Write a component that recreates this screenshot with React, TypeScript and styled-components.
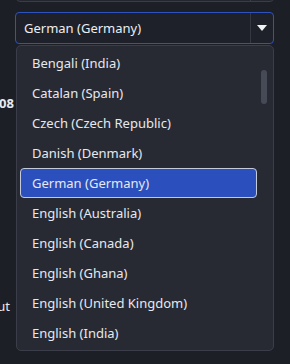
import React from "react";
import styled, { createGlobalStyle } from "styled-components";

const GlobalStyle = createGlobalStyle`
  html, body { margin: 0; padding: 0; background: #1c1f26; }
  body { font-family: "Noto Sans", "Open Sans", sans-serif; }
  * { box-sizing: border-box; }
`;

const Page = styled.div`
  position: relative;
  width: 290px;
  height: 364px;
  overflow: hidden;
  background: #1c1f26;
  color: #e4e7ee;
`;

const Column = styled.div`
  display: flex;
  flex-direction: column;
  gap: 10px;
  margin-top: -30px;
  padding-left: 15px;
`;

const PrevSelect = styled.div`
  width: 258px;
  height: 32px;
  margin-left: 1px;
  border: 1px solid #3a3d47;
  border-radius: 4px;
  background: #23262e;
  display: flex;
  justify-content: flex-end;
`;

const PrevDivider = styled.div`
  width: 23px;
  border-left: 1px solid #3a3d47;
`;

const SelectBox = styled.div`
  width: 259px;
  height: 32px;
  border: 1px solid #2e52be;
  border-radius: 4px;
  background: #1e2129;
  display: flex;
  align-items: stretch;
`;

const SelectValue = styled.div`
  flex: 1;
  display: flex;
  align-items: center;
  padding-left: 8px;
  font-size: 13px;
  color: #eceef3;
`;

const SelectArrow = styled.div`
  width: 23px;
  border-left: 1px solid #353843;
  display: flex;
  align-items: center;
  justify-content: center;
`;

const BehindText = styled.div<{ $top: number; $right: number; $bold?: boolean }>`
  position: absolute;
  top: ${(p) => p.$top}px;
  right: ${(p) => p.$right}px;
  font-size: 13px;
  font-weight: ${(p) => (p.$bold ? 700 : 400)};
  color: #e8eaef;
  white-space: nowrap;
`;

const Dropdown = styled.div`
  position: absolute;
  top: 45px;
  left: 16px;
  width: 258px;
  height: 306px;
  background: #282a33;
  border: 1px solid #3b3e49;
  border-radius: 5px;
  padding: 2px 16px 0 3px;
  display: flex;
  flex-direction: column;
  overflow: hidden;
`;

const Option = styled.div<{ $selected?: boolean }>`
  flex: none;
  height: 30px;
  display: flex;
  align-items: center;
  padding-left: 11px;
  border-radius: 4px;
  border: 1px solid ${(p) => (p.$selected ? "#c4cada" : "transparent")};
  background: ${(p) => (p.$selected ? "#2b4fbd" : "transparent")};
  font-size: 13px;
  color: #e6e8ee;
  white-space: nowrap;
`;

const Thumb = styled.div`
  position: absolute;
  top: 24px;
  right: 6px;
  width: 6px;
  height: 34px;
  border-radius: 3px;
  background: #464a56;
`;

const options = [
  "Bengali (India)",
  "Catalan (Spain)",
  "Czech (Czech Republic)",
  "Danish (Denmark)",
  "German (Germany)",
  "English (Australia)",
  "English (Canada)",
  "English (Ghana)",
  "English (United Kingdom)",
  "English (India)",
];

export default function App() {
  return (
    <>
      <GlobalStyle />
      <Page>
        <Column>
          <PrevSelect>
            <PrevDivider />
          </PrevSelect>
          <SelectBox>
            <SelectValue>German (Germany)</SelectValue>
            <SelectArrow>
              <svg width="10" height="6" viewBox="0 0 10 6">
                <path d="M0 0 H10 L5 6 Z" fill="#f2f3f6" />
              </svg>
            </SelectArrow>
          </SelectBox>
        </Column>
        <BehindText $top={94} $right={276} $bold>
          1608
        </BehindText>
        <BehindText $top={297} $right={280}>
          Output
        </BehindText>
        <Dropdown>
          {options.map((o) => (
            <Option key={o} $selected={o === "German (Germany)"}>
              {o}
            </Option>
          ))}
          <Thumb />
        </Dropdown>
      </Page>
    </>
  );
}
